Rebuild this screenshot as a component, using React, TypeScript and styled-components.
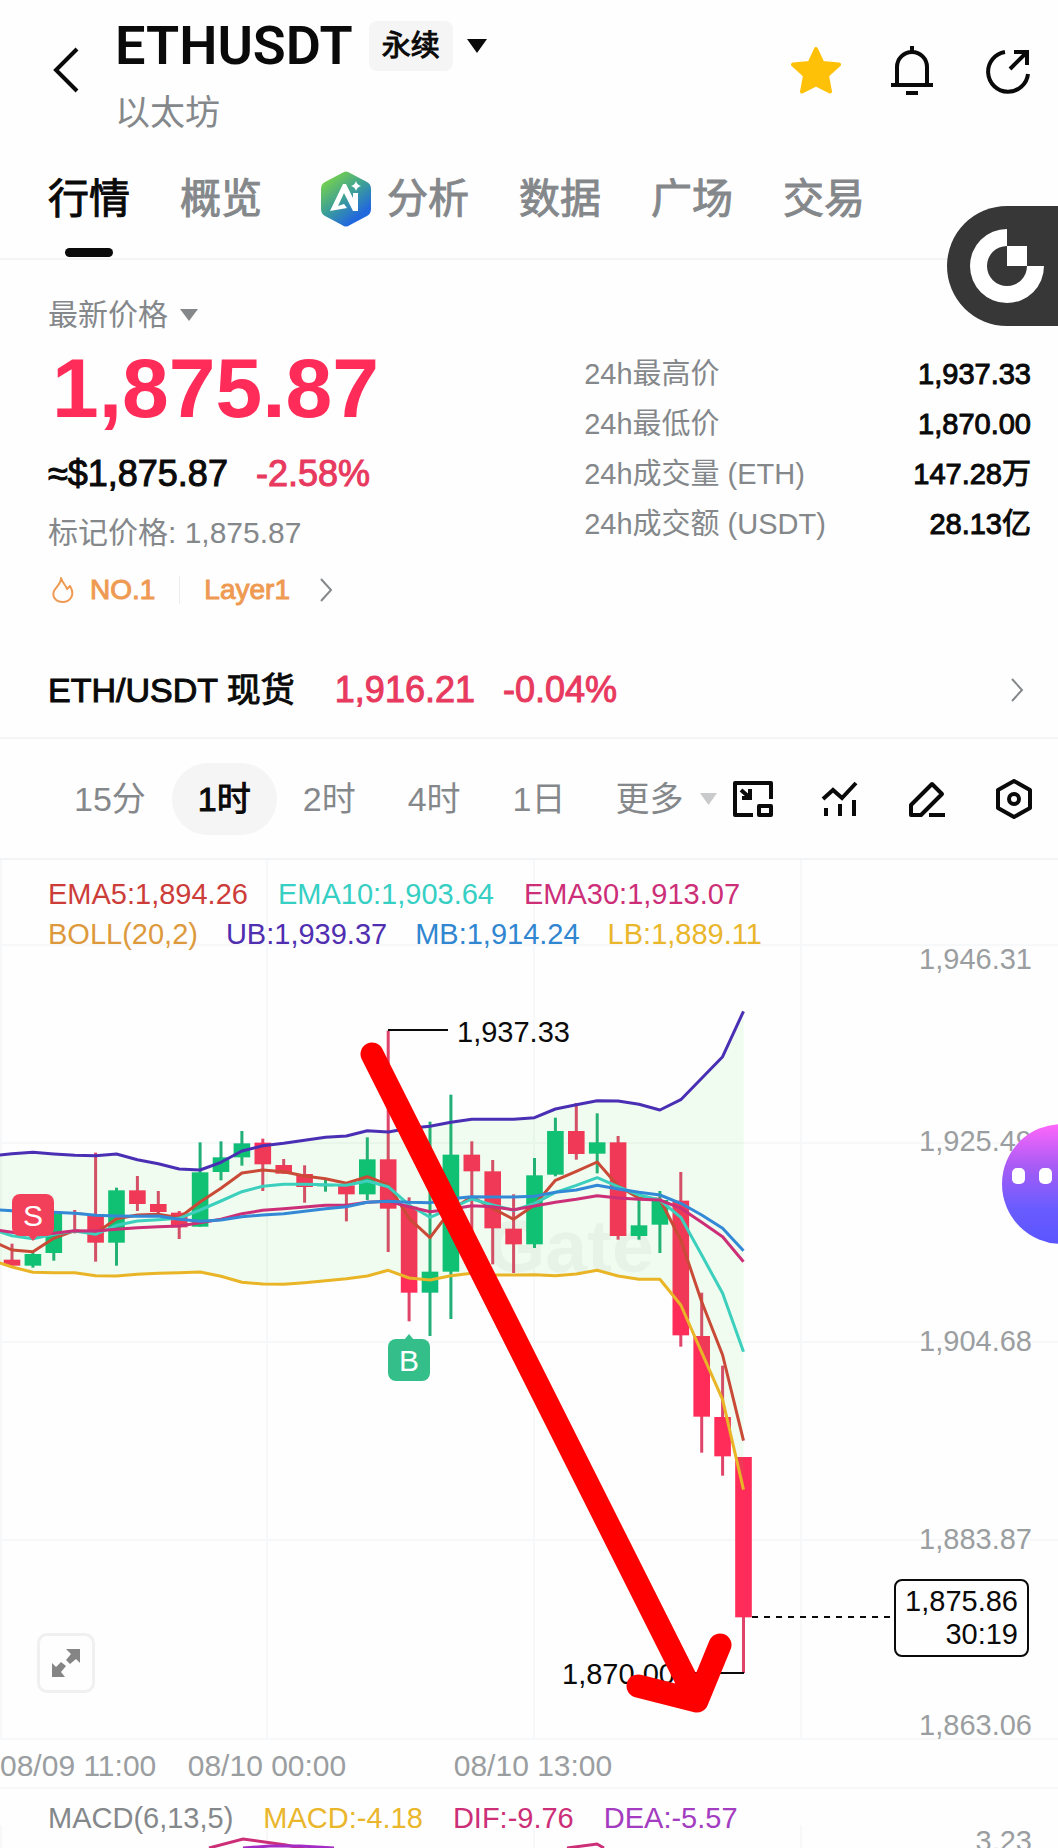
import React from "react";
import styled, { createGlobalStyle } from "styled-components";

const C = {
  ink: "#0a0a0a",
  grey: "#85888b",
  axis: "#9b9ea1",
  line: "#f3f4f5",
  grid: "#f7f8f9",
  fill: "#f5f5f5",
  up: "#0dbd78",
  down: "#ff2b58",
  rose: "#e8395f",
  orange: "#ef9a52",
};

const GlobalStyle = createGlobalStyle`
  * { box-sizing: border-box; }
  body {
    margin: 0;
    background: #fefefe;
    color: ${C.ink};
    font-family: "Liberation Sans", "Noto Sans CJK SC", sans-serif;
    font-size: 30px;
  }
  button {
    margin: 0;
    padding: 0;
    border: 0;
    background: none;
    color: inherit;
    font: inherit;
    cursor: pointer;
  }
  svg { display: block; }
`;

const Page = styled.main`
  position: relative;
  min-width: 720px;
  overflow: hidden;
`;

/* ---------- header ---------- */

const Header = styled.header`
  display: flex;
  align-items: center;
  height: 140px;
  padding: 0 25px 0 48px;
`;

const BackButton = styled.button`
  width: 36px;
  margin-right: 31px;
`;

const TitleBlock = styled.div`
  flex: 1;
  padding-top: 14px;
`;

const TitleRow = styled.div`
  display: flex;
  align-items: center;
  height: 58px;
`;

const Symbol = styled.h1`
  margin: 0;
  font-family: Roboto, "Liberation Sans", sans-serif;
  font-size: 54px;
  font-weight: 600;
  line-height: 58px;
`;

const Badge = styled.span`
  margin: 0 14px 0 16px;
  padding: 0 13px;
  border-radius: 8px;
  background: ${C.fill};
  font-size: 29px;
  line-height: 50px;
  -webkit-text-stroke: 1px currentColor;
`;

const Subtitle = styled.p`
  margin: 14px 0 0;
  color: ${C.grey};
  font-size: 35px;
  line-height: 48px;
`;

const HeaderActions = styled.div`
  display: flex;
  gap: 46px;
`;

/* ---------- tabs ---------- */

const Tabs = styled.nav`
  display: flex;
  gap: 50px;
  height: 120px;
  padding: 30px 48px 0;
  border-bottom: 2px solid ${C.line};
`;

const Tab = styled.button<{ $active?: boolean }>`
  display: flex;
  flex-direction: column;
  align-items: center;
  gap: 20px;
  color: ${(p) => (p.$active ? C.ink : C.grey)};
  font-size: 41px;
  line-height: 58px;
  -webkit-text-stroke: 1px currentColor;
`;

const TabLabel = styled.span`
  display: flex;
  align-items: center;
  gap: 16px;
`;

const TabIndicator = styled.span`
  width: 48px;
  height: 9px;
  border-radius: 5px;
  background: ${C.ink};
`;

const AiIcon = styled.svg`
  margin-left: 9px;
`;

const FloatingLogo = styled.button`
  position: absolute;
  top: 206px;
  right: 0;
  width: 111px;
  height: 120px;
  padding-left: 23px;
  border-radius: 60px 0 0 60px;
  background: #373737;
`;

/* ---------- ticker ---------- */

const Ticker = styled.section`
  display: grid;
  grid-template-columns: 6fr 5fr;
  padding: 34px 27px 34px 48px;
`;

const PriceType = styled.button`
  display: flex;
  align-items: center;
  gap: 12px;
  color: ${C.grey};
  line-height: 42px;
`;

const LastPrice = styled.div`
  margin: 4px 0 14px;
  padding-left: 4px;
  color: ${C.down};
  font-size: 84px;
  font-weight: 700;
  line-height: 96px;
`;

const Row = styled.div`
  display: flex;
  align-items: center;
`;

const Strong = styled.span<{ $color?: string }>`
  color: ${(p) => p.$color ?? C.ink};
  font-size: 36px;
  line-height: 48px;
  -webkit-text-stroke: 1px currentColor;
`;

const FiatRow = styled(Row)`
  gap: 28px;
`;

const MarkPrice = styled.p`
  margin: 14px 0 18px;
  color: ${C.grey};
  font-size: 30px;
  line-height: 42px;
`;

const TagRow = styled(Row)`
  height: 36px;
  color: ${C.orange};
  font-size: 28px;
  -webkit-text-stroke: 1px currentColor;
`;

const TagLink = styled.a<{ $gap: number }>`
  display: flex;
  align-items: center;
  gap: ${(p) => p.$gap}px;
  color: inherit;
  text-decoration: none;
`;

const TagDivider = styled.span`
  width: 1px;
  height: 28px;
  margin: 0 24px;
  background: #eceded;
`;

const Stats = styled.dl`
  margin: 55px 0 0;
`;

const Stat = styled.div`
  display: flex;
  justify-content: space-between;
  line-height: 50px;

  dt {
    color: ${C.grey};
    font-size: 29px;
  }
  dd {
    margin: 0;
    font-size: 29px;
    -webkit-text-stroke: 1px currentColor;
  }
`;

/* ---------- spot row ---------- */

const SpotLink = styled.a`
  display: flex;
  align-items: center;
  height: 97px;
  padding: 0 34px 0 48px;
  border-bottom: 2px solid ${C.line};
  color: inherit;
  text-decoration: none;
`;

const SpotName = styled.span`
  margin-right: 40px;
  font-size: 34px;
  line-height: 48px;
  -webkit-text-stroke: 1px currentColor;
`;

const SpotValues = styled.span`
  display: flex;
  flex: 1;
  gap: 28px;
`;

/* ---------- interval bar ---------- */

const Toolbar = styled.div`
  display: flex;
  align-items: center;
  justify-content: space-between;
  height: 121px;
  padding: 0 24px 0 48px;
  border-bottom: 2px solid ${C.line};
`;

const Intervals = styled.div`
  display: flex;
`;

const Interval = styled.button<{ $active?: boolean }>`
  height: 72px;
  padding: 0 26px;
  border-radius: 36px;
  background: ${(p) => (p.$active ? C.fill : "transparent")};
  color: ${(p) => (p.$active ? C.ink : C.grey)};
  font-size: 34px;
  line-height: 72px;
  white-space: nowrap;
  -webkit-text-stroke: ${(p) => (p.$active ? "1px currentColor" : "0")};
`;

const MoreInterval = styled(Interval)`
  display: flex;
  align-items: center;
  gap: 16px;
  padding: 0 0 0 24px;
`;

const Tools = styled.div`
  display: flex;
  gap: 47px;
`;

/* ---------- chart ---------- */

const ChartArea = styled.section`
  position: relative;
`;

const ChartSvg = styled.svg`
  font-family: "Liberation Sans", sans-serif;
  font-size: 29px;
`;

const Legend = styled.div`
  position: absolute;
  top: 14px;
  left: 48px;
`;

const LegendRow = styled.div`
  display: flex;
  gap: 30px;
  font-size: 29px;
  line-height: 40px;
`;

const BollRow = styled(LegendRow)`
  gap: 28px;
`;

const Value = styled.span<{ $color: string }>`
  color: ${(p) => p.$color};
`;

const ExpandButton = styled.button`
  position: absolute;
  left: 37px;
  bottom: 96px;
  display: grid;
  place-items: center;
  width: 58px;
  height: 60px;
  border: 3px solid #f0f0f0;
  border-radius: 10px;
  background: #fefefe;
`;

const PriceTag = styled.div`
  position: absolute;
  top: 719px;
  right: 29px;
  padding: 4px 9px;
  border: 2px solid ${C.ink};
  border-radius: 8px;
  background: #fefefe;
  font-size: 29px;
  line-height: 33px;
  text-align: right;
`;

const BotButton = styled.button`
  position: absolute;
  top: 264px;
  right: -64px;
  display: flex;
  gap: 14px;
  width: 120px;
  height: 120px;
  padding: 44px 0 0 10px;
  border-radius: 60px;
  background: linear-gradient(180deg, #ff66fb 0%, #a85cf5 35%, #6a5cff 70%, #5a55ff 100%);
`;

const BotEye = styled.span`
  width: 13px;
  height: 16px;
  border-radius: 5px;
  background: #fff;
`;

const MacdPanel = styled.section`
  position: relative;
  height: 59px;
  overflow: hidden;
`;

const MacdLegend = styled(LegendRow)`
  position: absolute;
  top: 9px;
  left: 48px;
`;

/* ---------- icons ---------- */

const Caret = ({ w = 20, h = 14, color = C.ink }) => (
  <svg width={w} height={h} viewBox="0 0 20 14" preserveAspectRatio="none" aria-hidden>
    <path d="M0 0H20L10 14Z" fill={color} />
  </svg>
);

const Chevron = () => (
  <svg width="14" height="24" viewBox="0 0 14 24" fill="none" stroke={C.grey} strokeWidth="2" aria-hidden>
    <path d="M2 1L12 12L2 23" />
  </svg>
);

/* ---------- chart data: 3 units per pixel, one entry per hour ---------- */

type Candle = [high: number, top: number, bottom: number, low: number, side: "u" | "d"];

const candles: Candle[] = [
  [731, 779, 797, 797, "d"], [757, 762, 797, 803, "u"], [640, 640, 759, 782, "u"], [630, 638, 642, 700, "d"],
  [458, 645, 728, 785, "d"], [563, 571, 728, 797, "u"], [528, 571, 612, 633, "d"], [573, 612, 636, 650, "d"],
  [633, 638, 682, 717, "d"], [427, 517, 680, 680, "u"], [424, 472, 516, 541, "u"], [393, 430, 472, 497, "u"],
  [416, 428, 493, 573, "d"], [477, 495, 521, 521, "d"], [496, 522, 561, 608, "d"], [540, 554, 559, 575, "u"],
  [548, 556, 583, 664, "d"], [412, 478, 583, 600, "u"], [92, 478, 626, 756, "d"], [592, 620, 878, 964, "d"],
  [365, 815, 878, 1008, "u"], [284, 464, 815, 957, "u"], [424, 464, 514, 700, "d"], [480, 514, 685, 793, "d"],
  [583, 686, 733, 819, "d"], [474, 526, 733, 744, "u"], [353, 393, 524, 529, "u"], [309, 393, 462, 479, "d"],
  [340, 427, 461, 520, "u"], [408, 427, 708, 719, "d"], [590, 676, 708, 719, "u"], [573, 600, 674, 759, "u"],
  [516, 602, 1006, 1040, "d"], [878, 1008, 1250, 1358, "d"], [1097, 1251, 1369, 1427, "d"], [1371, 1371, 1852, 2019, "d"],
];

/* Each series begins one hour before the first visible candle. */
const upper = [468, 461, 457, 462, 466, 467, 462, 479, 491, 507, 510, 487, 453, 437, 430, 421, 412, 408, 392, 396, 385, 379, 367, 358, 358, 358, 353, 327, 314, 302, 303, 313, 330, 299, 235, 170, 34];
const lower = [780, 801, 817, 818, 818, 827, 828, 823, 820, 818, 816, 829, 847, 852, 853, 848, 842, 836, 828, 811, 834, 840, 827, 820, 825, 825, 824, 827, 822, 811, 828, 838, 838, 915, 1057, 1199, 1469];
const middle = [628, 632, 635, 637, 640, 646, 648, 649, 648, 658, 664, 660, 650, 645, 641, 634, 626, 620, 607, 604, 607, 608, 596, 590, 591, 591, 589, 577, 570, 556, 567, 577, 585, 610, 645, 685, 752];
const ema30 = [688, 697, 706, 700, 692, 693, 688, 683, 680, 678, 668, 658, 641, 631, 626, 621, 616, 616, 607, 604, 620, 635, 628, 617, 620, 629, 618, 607, 598, 587, 594, 598, 600, 625, 667, 710, 785];
const ema10 = [688, 707, 716, 703, 693, 703, 676, 663, 659, 655, 630, 603, 575, 559, 553, 553, 554, 556, 543, 560, 615, 652, 625, 597, 615, 631, 610, 577, 556, 533, 560, 585, 600, 652, 765, 880, 1055];
const ema5 = [722, 750, 755, 715, 692, 700, 656, 645, 643, 653, 606, 565, 519, 510, 515, 528, 536, 550, 530, 554, 655, 713, 630, 590, 625, 658, 615, 541, 514, 486, 558, 595, 598, 720, 905, 1065, 1322];

const X0 = 12;
const STEP = 20.9;
const x = (i: number) => X0 + STEP * i;
const y = (v: number) => 140 + v / 3;
const points = (series: number[]) => series.map((v, i) => `${x(i - 1).toFixed(1)},${y(v).toFixed(1)}`);
const line = (series: number[]) => points(series).join(" ");
const band = [...points(upper), ...points(lower).reverse()].join(" ");

const gridX = [1, 267, 534, 801];
const gridY = [85, 283, 482, 680, 879];
const priceAxis: [string, number][] = [
  ["1,946.31", 99], ["1,925.49", 281], ["1,904.68", 481], ["1,883.87", 679], ["1,863.06", 865],
];

function KLine() {
  return (
    <ChartSvg width="100%" height="929" role="img" aria-label="ETHUSDT 1时">
      <g stroke={C.grid} strokeWidth="2">
        {gridX.map((gx) => <line key={gx} x1={gx} x2={gx} y1="0" y2="879" />)}
        {gridY.map((gy) => <line key={gy} x1="0" x2="100%" y1={gy} y2={gy} />)}
        <line x1="0" x2="100%" y1="928" y2="928" />
      </g>
      <text x="487" y="412" fontSize="75" fontWeight="700" fill="#f5f5f5">Gate</text>
      {candles.map(([high, top, bottom, low, side], i) => (
        <g key={i} fill={side === "u" ? C.up : C.down}>
          <rect x={x(i) - 1.5} y={y(high)} width="3" height={(low - high) / 3} fill={side === "u" ? "#22ae79" : "#e0446a"} />
          <rect x={x(i) - 8.3} y={y(top)} width="16.6" height={(bottom - top) / 3} />
        </g>
      ))}
      <polygon points={band} fill="#44e646" opacity="0.08" />
      <g fill="none" strokeWidth="3" strokeLinejoin="round">
        <polyline points={line(ema5)} stroke="#c94a36" />
        <polyline points={line(ema10)} stroke="#3ccfbd" />
        <polyline points={line(ema30)} stroke="#cc2f78" />
        <polyline points={line(middle)} stroke="#3389d6" />
        <polyline points={line(upper)} stroke="#4a2fb5" />
        <polyline points={line(lower)} stroke="#e9b526" />
      </g>
      <g fill={C.axis} textAnchor="end">
        {priceAxis.map(([label, cy]) => (
          <text key={label} x="100%" dx="-26" y={cy + 10}>{label}</text>
        ))}
      </g>
      <g fill={C.axis} fontSize="30">
        <text x="0" y="916">08/09 11:00</text>
        <text x="267" y="916" textAnchor="middle">08/10 00:00</text>
        <text x="533" y="916" textAnchor="middle">08/10 13:00</text>
      </g>
      <g stroke={C.ink} strokeWidth="2">
        <line x1="388" x2="448" y1="170" y2="170" />
        <line x1="684" x2="744" y1="813" y2="813" />
      </g>
      <g fill={C.ink}>
        <text x="457" y="182">1,937.33</text>
        <text x="562" y="824">1,870.00</text>
      </g>
      <line x1="752" x2="894" y1="757" y2="757" stroke={C.ink} strokeWidth="2" strokeDasharray="6 6" />
      <g fill="#f3405a">
        <rect x="12" y="334" width="42" height="42" rx="8" />
        <path d="M28 375H38L33 381Z" />
      </g>
      <g fill="#34bf8a">
        <rect x="388" y="479" width="42" height="42" rx="8" />
        <path d="M404 480H414L409 474Z" />
      </g>
      <g fill="#fff" fontSize="30" textAnchor="middle">
        <text x="33" y="366">S</text>
        <text x="409" y="511">B</text>
      </g>
      <path
        d="M372 194L697 841M638 826L697 841L720 785"
        fill="none"
        stroke="#ff0000"
        strokeWidth="23"
        strokeLinecap="round"
        strokeLinejoin="round"
      />
    </ChartSvg>
  );
}

const stats: [string, string][] = [
  ["24h最高价", "1,937.33"],
  ["24h最低价", "1,870.00"],
  ["24h成交量 (ETH)", "147.28万"],
  ["24h成交额 (USDT)", "28.13亿"],
];

export default function App() {
  return (
    <Page>
      <GlobalStyle />
      <Header>
        <BackButton aria-label="返回">
          <svg width="36" height="48" viewBox="0 0 36 48" fill="none" stroke={C.ink} strokeWidth="4">
            <path d="M29 3L8 24L29 45" />
          </svg>
        </BackButton>
        <TitleBlock>
          <TitleRow>
            <Symbol>ETHUSDT</Symbol>
            <Badge>永续</Badge>
            <Caret />
          </TitleRow>
          <Subtitle>以太坊</Subtitle>
        </TitleBlock>
        <HeaderActions>
          <button aria-label="收藏">
            <svg width="50" height="50" viewBox="0 0 50 50" fill="#ffc107" stroke="#ffc107" strokeWidth="4" strokeLinejoin="round">
              <path d="M25 4L31.5 18L48 19.5L36 30.500L39 46.500L25 39.500L11 46.500L14 30.500L2 19.500L18.500 18Z" />
            </svg>
          </button>
          <button aria-label="提醒">
            <svg width="50" height="50" viewBox="0 0 50 50" fill="none" stroke={C.ink} strokeWidth="4">
              <path d="M4 40H46M10 40V22A15 15 0 0 1 40 22V40M25 1V8M19 48H31" />
            </svg>
          </button>
          <button aria-label="分享">
            <svg width="50" height="50" viewBox="0 0 50 50" fill="none" stroke={C.ink} strokeWidth="4">
              <path d="M22 7A20 20 0 1 0 45 29M27 24L43 8M31 7H44V20" />
            </svg>
          </button>
        </HeaderActions>
      </Header>

      <Tabs>
        <Tab $active>
          <TabLabel>行情</TabLabel>
          <TabIndicator />
        </Tab>
        <Tab>概览</Tab>
        <Tab>
          <TabLabel>
            <AiIcon width="50" height="56" viewBox="0 0 50 56" aria-hidden>
              <defs>
                <linearGradient id="ai" x1="0.1" y1="0" x2="0.8" y2="1">
                  <stop offset="0" stopColor="#84dc3c" />
                  <stop offset="0.5" stopColor="#3c9f98" />
                  <stop offset="0.85" stopColor="#2268dd" />
                </linearGradient>
              </defs>
              <path d="M21 2Q25 -1 29 2L46 11Q50 13 50 18V38Q50 43 46 45L29 54Q25 57 21 54L4 45Q0 43 0 38V18Q0 13 4 11Z" fill="url(#ai)" />
              <path d="M9 40L22 13H25L32 27V22H37V40H32L23 22L17 35L23 33L26 37Z" fill="#fff" />
              <path d="M35 10Q36 14 40 15Q36 16 35 20Q34 16 30 15Q34 14 35 10Z" fill="#fff" />
            </AiIcon>
            分析
          </TabLabel>
        </Tab>
        <Tab>数据</Tab>
        <Tab>广场</Tab>
        <Tab>交易</Tab>
      </Tabs>

      <FloatingLogo aria-label="Gate">
        <svg width="74" height="74" viewBox="0 0 74 74" fill="#fff">
          <path d="M37 0A37 37 0 1 0 74 37H57A20 20 0 1 1 37 17Z" />
          <rect x="37" y="17" width="20" height="20" />
        </svg>
      </FloatingLogo>

      <Ticker>
        <div>
          <PriceType>
            最新价格
            <Caret w={18} h={12} color={C.grey} />
          </PriceType>
          <LastPrice>1,875.87</LastPrice>
          <FiatRow>
            <Strong>≈$1,875.87</Strong>
            <Strong $color={C.rose}>-2.58%</Strong>
          </FiatRow>
          <MarkPrice>标记价格: 1,875.87</MarkPrice>
          <TagRow>
            <TagLink href="#rank" $gap={16}>
              <svg width="26" height="28" viewBox="0 0 26 28" fill="none" stroke={C.orange} strokeWidth="2" strokeLinejoin="round" aria-hidden>
                <path d="M13 2C14 7 18 9 19 13L22 10C28 20 21 26 15 26C7 26 4 20 6 15C8 11 13 8 13 2Z" />
              </svg>
              NO.1
            </TagLink>
            <TagDivider />
            <TagLink href="#layer1" $gap={29}>
              Layer1
              <Chevron />
            </TagLink>
          </TagRow>
        </div>
        <Stats>
          {stats.map(([name, value]) => (
            <Stat key={name}>
              <dt>{name}</dt>
              <dd>{value}</dd>
            </Stat>
          ))}
        </Stats>
      </Ticker>

      <SpotLink href="#spot">
        <SpotName>ETH/USDT 现货</SpotName>
        <SpotValues>
          <Strong $color={C.rose}>1,916.21</Strong>
          <Strong $color={C.rose}>-0.04%</Strong>
        </SpotValues>
        <Chevron />
      </SpotLink>

      <Toolbar>
        <Intervals>
          <Interval>15分</Interval>
          <Interval $active>1时</Interval>
          <Interval>2时</Interval>
          <Interval>4时</Interval>
          <Interval>1日</Interval>
          <MoreInterval aria-haspopup="menu">
            更多
            <Caret w={17} h={12} color="#c9cacb" />
          </MoreInterval>
        </Intervals>
        <Tools>
          <button aria-label="小窗">
            <svg width="40" height="40" viewBox="0 0 40 40" fill="none" stroke={C.ink} strokeWidth="4" strokeLinejoin="round">
              <path d="M20 36H2V4H38V20" />
              <rect x="26" y="27" width="12" height="9" />
              <path d="M8 11L16 18M17 10V19H9" strokeLinejoin="miter" />
            </svg>
          </button>
          <button aria-label="指标">
            <svg width="40" height="40" viewBox="0 0 40 40" fill="none" stroke={C.ink} strokeWidth="4">
              <path d="M3 20L13 11L22 19L36 4M6 37V29M20 37V25M34 37V21" />
            </svg>
          </button>
          <button aria-label="画线">
            <svg width="40" height="40" viewBox="0 0 40 40" fill="none" stroke={C.ink} strokeWidth="4" strokeLinejoin="round">
              <path d="M4 36V26L25 5L35 15L14 36ZM22 36H38" />
            </svg>
          </button>
          <button aria-label="设置">
            <svg width="40" height="40" viewBox="0 0 40 40" fill="none" stroke={C.ink} strokeWidth="4" strokeLinejoin="round">
              <path d="M20 2L36 11V29L20 38L4 29V11Z" />
              <circle cx="20" cy="20" r="5" />
            </svg>
          </button>
        </Tools>
      </Toolbar>

      <ChartArea>
        <KLine />
        <Legend>
          <LegendRow>
            <Value $color="#cc3d3a">EMA5:1,894.26</Value>
            <Value $color="#36cfc4">EMA10:1,903.64</Value>
            <Value $color="#cc2f78">EMA30:1,913.07</Value>
          </LegendRow>
          <BollRow>
            <Value $color="#dd9a3c">BOLL(20,2)</Value>
            <Value $color="#4f2fb0">UB:1,939.37</Value>
            <Value $color="#3086d0">MB:1,914.24</Value>
            <Value $color="#e9b62c">LB:1,889.11</Value>
          </BollRow>
        </Legend>
        <PriceTag>
          <div>1,875.86</div>
          <div>30:19</div>
        </PriceTag>
        <ExpandButton aria-label="全屏">
          <svg width="28" height="28" viewBox="0 0 28 28" fill="#858585">
            <path d="M14 0H28V14L24 10L18 15L14 11L19 5ZM0 14L4 18L9 13L14 17L9 23L13 28H0Z" />
          </svg>
        </ExpandButton>
        <BotButton aria-label="助手">
          <BotEye />
          <BotEye />
        </BotButton>
      </ChartArea>

      <MacdPanel>
        <ChartSvg width="100%" height="59" aria-hidden>
          <g stroke={C.grid} strokeWidth="2">
            {gridX.map((gx) => <line key={gx} x1={gx} x2={gx} y1="36" y2="59" />)}
          </g>
          <g fill="none" strokeWidth="3">
            <path d="M209 59L243 50L286 56L320 63M567 59L597 55L604 59" stroke="#cc2f78" />
            <path d="M243 59L270 57L300 57L334 59" stroke="#a32cc4" />
          </g>
          <text x="100%" dx="-26" y="62" textAnchor="end" fill={C.axis}>3.23</text>
        </ChartSvg>
        <MacdLegend>
          <Value $color={C.grey}>MACD(6,13,5)</Value>
          <Value $color="#e9b62c">MACD:-4.18</Value>
          <Value $color="#cc2f78">DIF:-9.76</Value>
          <Value $color="#a33cc0">DEA:-5.57</Value>
        </MacdLegend>
      </MacdPanel>
    </Page>
  );
}
